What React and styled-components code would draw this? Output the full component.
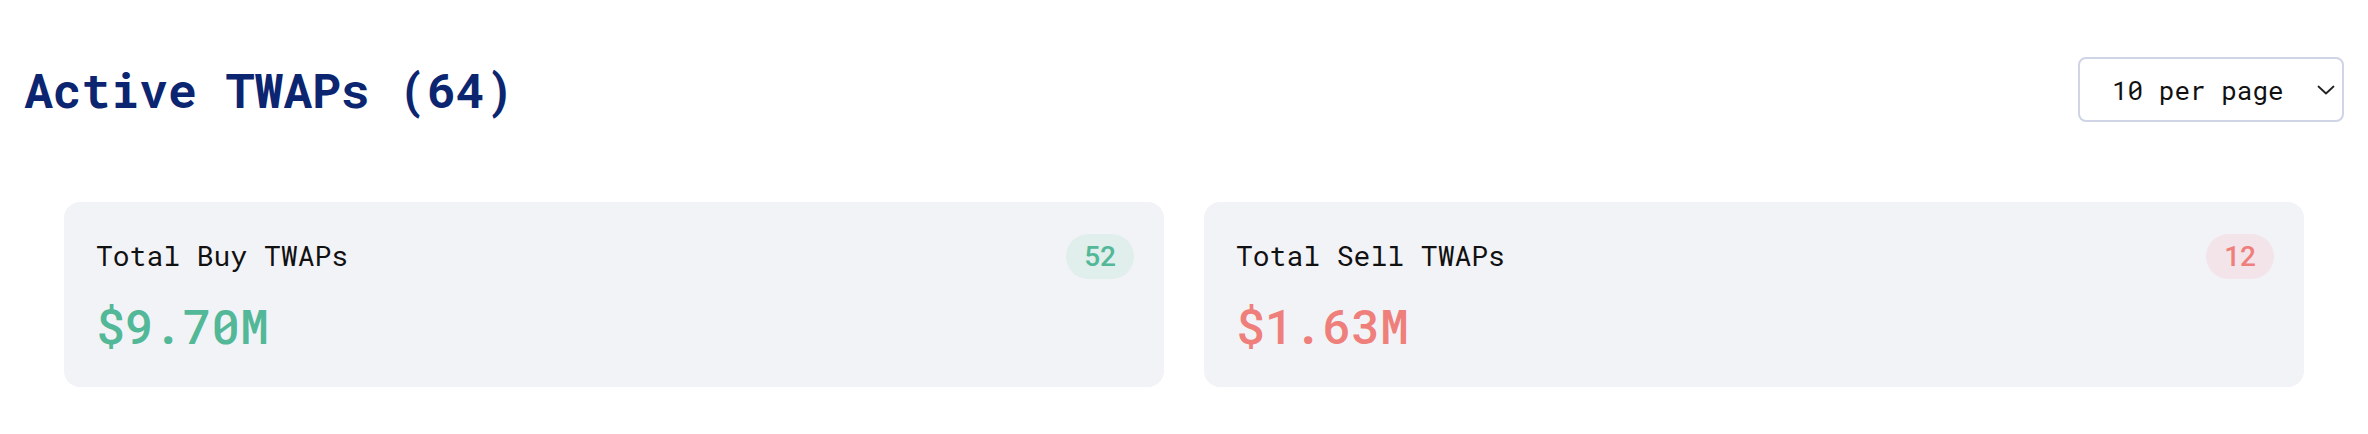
import React from "react";
import styled, { createGlobalStyle } from "styled-components";

const Global = createGlobalStyle`
  html, body { margin: 0; padding: 0; background: #ffffff; }
  body { font-family: "Roboto Mono", "DejaVu Sans Mono", monospace; }
  * { box-sizing: border-box; }
`;

const MONO = `"Roboto Mono", "DejaVu Sans Mono", monospace`;

const Page = styled.div`
  padding: 57px 24px 48px 24px;
  display: flex;
  flex-direction: column;
  gap: 80px;
`;

const Header = styled.div`
  display: flex;
  align-items: center;
  justify-content: space-between;
  height: 65px;
`;

const Title = styled.h1`
  margin: 0;
  font-family: ${MONO};
  font-weight: 700;
  font-size: 48px;
  line-height: 1.2;
  color: #0b2571;
`;

const SelectWrap = styled.div`
  position: relative;
  width: 266px;
  height: 65px;
`;

const Select = styled.select`
  appearance: none;
  -webkit-appearance: none;
  width: 100%;
  height: 100%;
  border: 2px solid #cfd4e6;
  border-radius: 8px;
  background: #ffffff;
  padding: 0 40px 0 32px;
  font-family: ${MONO};
  font-size: 26px;
  color: #111111;
  outline: none;
`;

const Chevron = styled.svg`
  position: absolute;
  right: 9px;
  top: 28px;
  pointer-events: none;
`;

const Cards = styled.div`
  display: grid;
  grid-template-columns: 1fr 1fr;
  gap: 40px;
  padding: 0 40px;
`;

const Card = styled.div`
  background: #f2f3f7;
  border-radius: 16px;
  padding: 32px 30px 32px 32px;
  display: flex;
  flex-direction: column;
  gap: 18px;
`;

const CardHead = styled.div`
  display: flex;
  align-items: center;
  justify-content: space-between;
  height: 45px;
`;

const Label = styled.div`
  font-family: ${MONO};
  font-size: 28px;
  line-height: 42px;
  color: #111111;
  margin-top: -2px;
`;

const Badge = styled.div`
  height: 45px;
  padding: 0 18px;
  border-radius: 999px;
  display: flex;
  align-items: center;
  font-family: Roboto, "Noto Sans", sans-serif;
  font-weight: 500;
  font-size: 28px;
  background: ${(p) => (p.$tone === "buy" ? "#e0eeec" : "#f3e4e9")};
  color: ${(p) => (p.$tone === "buy" ? "#52b898" : "#ef7f7b")};
`;

const Value = styled.div`
  font-family: ${MONO};
  font-weight: 500;
  font-size: 48px;
  line-height: 1.2;
  color: ${(p) => (p.$tone === "buy" ? "#52b898" : "#ef7f7b")};
`;

const stats = [
  { label: "Total Buy TWAPs", count: 52, value: "$9.70M", tone: "buy" },
  { label: "Total Sell TWAPs", count: 12, value: "$1.63M", tone: "sell" },
];

export default function App() {
  return (
    <>
      <Global />
      <Page>
        <Header>
          <Title>Active TWAPs (64)</Title>
          <SelectWrap>
            <Select defaultValue="10">
              <option value="10">10 per page</option>
              <option value="25">25 per page</option>
              <option value="50">50 per page</option>
            </Select>
            <Chevron width="18" height="10" viewBox="0 0 18 10">
              <polyline
                points="1.5,1.5 9,8.5 16.5,1.5"
                fill="none"
                stroke="#222"
                strokeWidth="1.8"
                strokeLinecap="round"
                strokeLinejoin="round"
              />
            </Chevron>
          </SelectWrap>
        </Header>
        <Cards>
          {stats.map((s) => (
            <Card key={s.label}>
              <CardHead>
                <Label>{s.label}</Label>
                <Badge $tone={s.tone}>{s.count}</Badge>
              </CardHead>
              <Value $tone={s.tone}>{s.value}</Value>
            </Card>
          ))}
        </Cards>
      </Page>
    </>
  );
}
